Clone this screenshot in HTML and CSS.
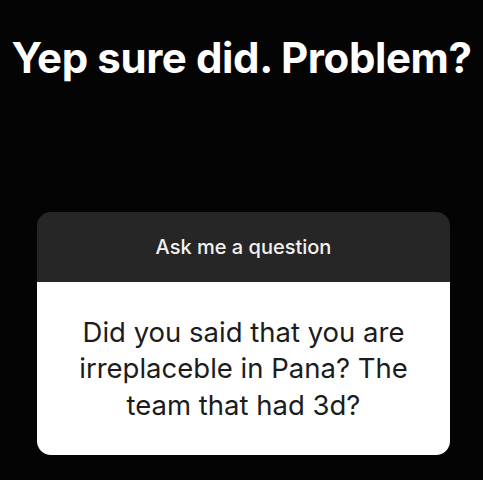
FILE: index.html
```html
<!DOCTYPE html>
<html>
<head>
<meta charset="utf-8">
<link rel="stylesheet" href="styles.css">
</head>
<body>
<div class="page">
  <h1 class="headline">Yep sure did. Problem?</h1>
  <div class="card">
    <div class="card-head">Ask me a question</div>
    <div class="card-body">Did you said that you are irreplaceble in Pana? The team that had 3d?</div>
  </div>
</div>
</body>
</html>
```
FILE: styles.css
```css
html, body {
  margin: 0;
  padding: 0;
  background: #040404;
}
.page {
  width: 483px;
  height: 480px;
  display: flex;
  flex-direction: column;
  font-family: Inter, "Noto Sans", sans-serif;
}
.headline {
  margin: 0;
  padding-top: 34px;
  height: 212px;
  box-sizing: border-box;
  text-align: center;
  color: #fff;
  font-size: 42px;
  font-weight: 700;
  line-height: 48px;
  letter-spacing: -0.4px;
}
.card {
  margin-left: 37px;
  width: 413px;
  border-radius: 14px;
  overflow: hidden;
  display: flex;
  flex-direction: column;
}
.card-head {
  height: 70px;
  background: #262626;
  color: #f2f2f2;
  font-size: 20px;
  font-weight: 500;
  display: flex;
  align-items: center;
  justify-content: center;
}
.card-body {
  height: 173px;
  background: #fff;
  color: #1c1c1c;
  font-size: 27.5px;
  line-height: 36.5px;
  text-align: center;
  display: flex;
  align-items: center;
  justify-content: center;
  padding: 0 40px;
  box-sizing: border-box;
}
```
